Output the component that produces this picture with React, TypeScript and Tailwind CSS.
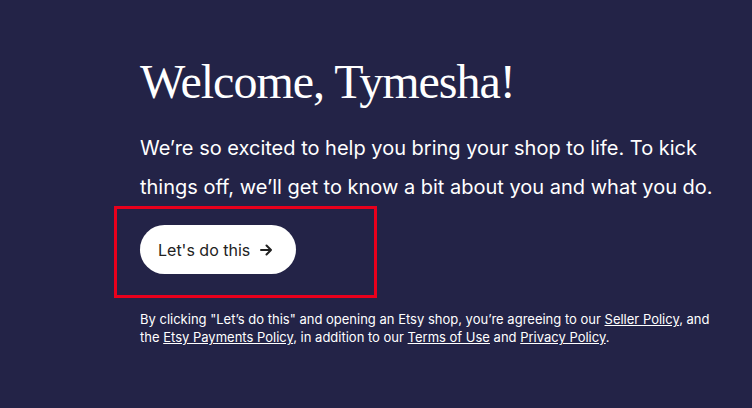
import React from "react";

export default function App() {
  return (
    <div className="w-[752px] h-[408px] bg-[#232347] text-white overflow-hidden">
      <div className="pl-[140px] pt-[54px] pr-[20px]">
        <h1 className="text-[48px] leading-[56px] text-white font-['Liberation_Serif',serif] tracking-[-1px]">
          Welcome, Tymesha!
        </h1>
        <p className="mt-[19px] text-[20px] leading-[39px] font-['Inter',sans-serif] w-[590px]">
          We’re so excited to help you bring your shop to life. To kick things off, we’ll get to know a bit about you and what you do.
        </p>
        <div className="ml-[-26px] mt-[-1px] w-[263px] h-[92px] border-[3px] border-[#e8001c] pl-[23px] pt-[16px]">
          <button className="h-[49px] w-[156px] rounded-full bg-white text-[#222222] flex items-center pl-[18px] gap-[10px] font-['Inter',sans-serif] text-[16px]">
            <span>Let's do this</span>
            <svg width="12" height="12" viewBox="0 0 12 12" fill="none" stroke="#222" strokeWidth="2" strokeLinecap="round" strokeLinejoin="round">
              <path d="M1 6h10M6.5 1.5L11 6l-4.5 4.5" />
            </svg>
          </button>
        </div>
        <p className="mt-[12px] text-[13px] leading-[18px] font-['Inter',sans-serif] w-[578px]">
          By clicking "Let’s do this" and opening an Etsy shop, you’re agreeing to our <span className="underline">Seller Policy</span>, and the <span className="underline">Etsy Payments Policy</span>, in addition to our <span className="underline">Terms of Use</span> and <span className="underline">Privacy Policy</span>.
        </p>
      </div>
    </div>
  );
}
